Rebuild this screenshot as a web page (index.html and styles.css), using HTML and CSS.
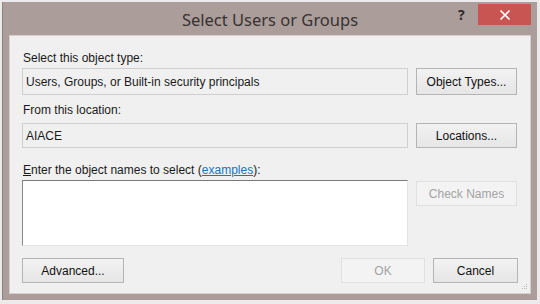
FILE: index.html
```html
<!DOCTYPE html>
<html>
<head>
<meta charset="utf-8">
<link rel="stylesheet" href="styles.css">
</head>
<body>
<div class="window">
  <div class="titlebar">
    <div class="title">Select Users or Groups</div>
    <div class="help">?</div>
    <div class="close">
      <svg width="12" height="12" viewBox="0 0 12 12"><path d="M1.5 1.5 L10.5 10.5 M10.5 1.5 L1.5 10.5" stroke="#fff" stroke-width="1.6" fill="none"/></svg>
    </div>
  </div>
  <div class="client">
    <div class="label l1">Select this object type:</div>
    <div class="row r1">
      <div class="field ro">Users, Groups, or Built-in security principals</div>
      <div class="btn">Object Types...</div>
    </div>
    <div class="label l2">From this location:</div>
    <div class="row r2">
      <div class="field ro">AIACE</div>
      <div class="btn">Locations...</div>
    </div>
    <div class="label l3"><u>E</u>nter the object names to select (<span class="link">examples</span>):</div>
    <div class="row r3">
      <div class="field edit"></div>
      <div class="btn disabled small">Check Names</div>
    </div>
    <div class="bottom">
      <div class="btn adv">Advanced...</div>
      <div class="spacer"></div>
      <div class="btn disabled ok">OK</div>
      <div class="btn cancel">Cancel</div>
    </div>
    <div class="grip">
      <svg width="7" height="7" viewBox="0 0 7 7"><g fill="#b8b8b8"><rect x="5" y="0" width="1" height="1"/><rect x="3" y="2" width="1" height="1"/><rect x="5" y="2" width="1" height="1"/><rect x="1" y="4" width="1" height="1"/><rect x="3" y="4" width="1" height="1"/><rect x="5" y="4" width="1" height="1"/></g></svg>
    </div>
  </div>
</div>
</body>
</html>
```
FILE: styles.css
```css
html, body {
  margin: 0;
  padding: 0;
}
body {
  width: 540px;
  height: 304px;
  background: #eceaea;
  overflow: hidden;
  font-family: "Liberation Sans", Arial, sans-serif;
  font-size: 12px;
  color: #1a1a1a;
}
.window {
  margin: 2px 3px 0 2px;
  width: 535px;
  height: 298px;
  background: #ab9d99;
  box-sizing: border-box;
  border-left: 1px solid #8d817e;
  display: flex;
  flex-direction: column;
  position: relative;
}
.titlebar {
  height: 34px;
  position: relative;
  display: flex;
  align-items: center;
  justify-content: center;
}
.title {
  font-family: "Noto Sans", "Open Sans", sans-serif;
  font-size: 16.5px;
  color: #383232;
  margin-top: 1px;
}
.help {
  position: absolute;
  left: 455px;
  top: 3px;
  font-family: "Noto Sans", sans-serif;
  font-weight: bold;
  font-size: 14px;
  color: #2e2a2a;
}
.close {
  position: absolute;
  left: 475px;
  top: 2px;
  width: 53px;
  height: 21px;
  background: #c85552;
  display: flex;
  align-items: center;
  justify-content: center;
}
.client {
  margin: 0 7px 7px 7px;
  flex: 1;
  background: #f0f0f0;
  box-shadow: 0 0 0 1px #d8cfcd;
  padding: 15px 12px 10px 12px;
  display: flex;
  flex-direction: column;
  position: relative;
}
.label {
  height: 14px;
  line-height: 14px;
  padding-left: 1px;
}
.l1 { margin-bottom: 3px; }
.l2 { margin-top: 8px; margin-bottom: 6px; }
.l3 { margin-top: 15px; margin-bottom: 3px; }
.link {
  color: #2174b4;
  text-decoration: underline;
}
.row {
  display: flex;
  gap: 8px;
  align-items: flex-start;
}
.r1 { height: 27px; }
.r2 { height: 25px; }
.r3 { height: 66px; }
.field {
  width: 386px;
  height: 100%;
  box-sizing: border-box;
  padding-left: 3px;
  display: flex;
  align-items: center;
}
.ro {
  border: 1px solid #cfcfcf;
  background: #f0f0f0;
}
.edit {
  background: #fff;
  border-top: 1px solid #7b7b7b;
  border-left: 1px solid #8a8a8a;
  border-right: 1px solid #e4e4e4;
  border-bottom: 1px solid #e4e4e4;
}
.btn {
  width: 101px;
  height: 27px;
  box-sizing: border-box;
  border: 1px solid #b4b4b4;
  background: linear-gradient(#f2f2f2, #e6e6e6);
  display: flex;
  align-items: center;
  justify-content: center;
  color: #111;
}
.r2 .btn { height: 25px; }
.btn.small { height: 25px; margin-top: 1px; }
.btn.disabled {
  border-color: #e0e0e0;
  background: #f3f3f3;
  color: #a3a3a3;
}
.bottom {
  margin-top: 12px;
  height: 25px;
  display: flex;
}
.bottom .btn { height: 25px; }
.adv { width: 102px; }
.spacer { flex: 1; }
.ok { width: 84px; margin-right: 8px; }
.cancel { width: 85px; }
.grip {
  position: absolute;
  right: 2px;
  bottom: 2px;
  line-height: 0;
}
```
